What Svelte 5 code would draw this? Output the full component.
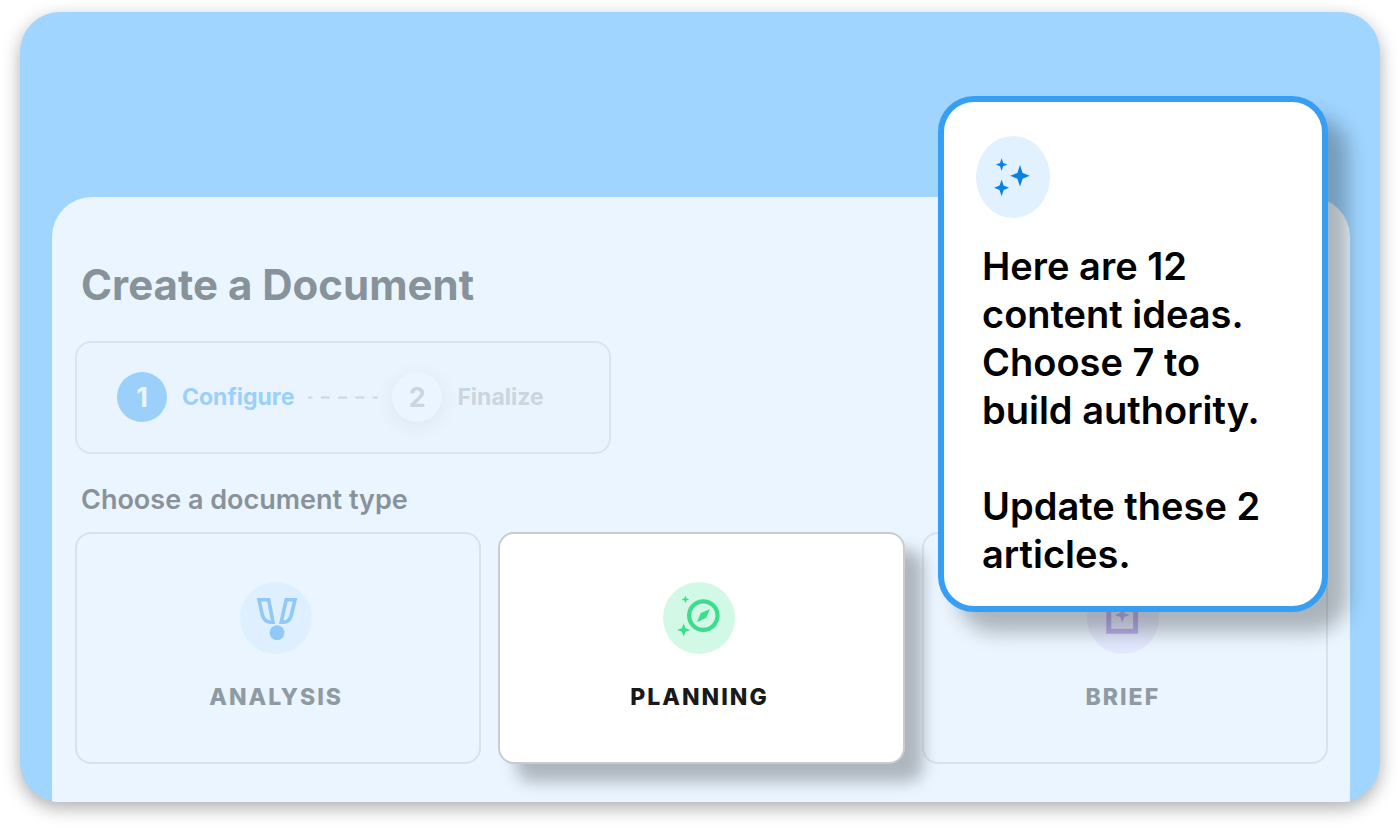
<script>
	const steps = [
		{ number: 1, label: 'Configure' },
		{ number: 2, label: 'Finalize' }
	];

	const documentTypes = [
		{ id: 'analysis', label: 'Analysis' },
		{ id: 'planning', label: 'Planning' },
		{ id: 'brief', label: 'Brief' }
	];

	let currentStep = $state(1);
	let selected = $state('planning');

	// four-pointed sparkle centred on cx, cy
	function sparkle(cx, cy, rx, ry = rx) {
		const x = rx * 0.27;
		const y = ry * 0.27;
		return `M${cx} ${cy - ry}L${cx + x} ${cy - y}L${cx + rx} ${cy}L${cx + x} ${cy + y}L${cx} ${cy + ry}L${cx - x} ${cy + y}L${cx - rx} ${cy}L${cx - x} ${cy - y}Z`;
	}
</script>

<main class="stage">
	<section class="panel">
		<h1>Create a Document</h1>

		<ol class="stepper">
			{#each steps as step (step.number)}
				<li class="step" class:current={step.number === currentStep}>
					<span class="number">{step.number}</span>
					<span class="label">{step.label}</span>
				</li>
				{#if step.number < steps.length}
					<li class="connector" aria-hidden="true">
						<svg width="70" height="3" viewBox="0 0 70 3">
							<path d="M0 1.5H70" stroke-width="2.2" stroke-dasharray="9 8.3" stroke-dashoffset="4.5" />
						</svg>
					</li>
				{/if}
			{/each}
		</ol>

		<h2>Choose a document type</h2>

		<div class="cards">
			{#each documentTypes as type (type.id)}
				<button
					type="button"
					class="card {type.id}"
					class:selected={selected === type.id}
					aria-pressed={selected === type.id}
					onclick={() => (selected = type.id)}
				>
					<svg class="icon" viewBox="0 0 72 72" aria-hidden="true">
						<circle class="disc" cx="36" cy="36" r="36" />
						{#if type.id === 'analysis'}
							<path
								class="line"
								stroke-width="3.6"
								d="M19 17.8H28.7L33 40.3H31C26.5 40.3 23.4 37 22.3 32.8ZM46.2 17.8H55L51.2 33.5C50 37.8 47.5 40.3 43.3 40.3H41.2Z"
							/>
							<circle class="fill" cx="37" cy="50.7" r="7.4" />
						{:else if type.id === 'planning'}
							<circle class="line" stroke-width="4.2" cx="40.3" cy="33.6" r="14.2" />
							<path class="fill" d="M47 27L43.2 35.8L34 40.3L37.6 31.3Z" />
							<path class="fill" d={sparkle(22.4, 17.4, 3.8)} />
							<path class="fill" d={sparkle(20.7, 48, 6.6)} />
						{:else}
							<path class="line" stroke-width="5" d="M21.8 16.5H48.6V49.2H21.8Z" />
							<path class="fill" d={sparkle(35.2, 33, 7.5)} />
						{/if}
					</svg>
					<span>{type.label}</span>
				</button>
			{/each}
		</div>
	</section>

	<aside class="suggestion" aria-label="Suggestion">
		<svg class="badge" viewBox="0 0 74 82" aria-hidden="true">
			<ellipse cx="37" cy="41" rx="37" ry="41" />
			<path d={sparkle(25.6, 28.6, 5.8, 6.3)} />
			<path d={sparkle(25.6, 51.8, 7.5, 8.4)} />
			<path d={sparkle(44, 39.8, 9.8, 10.7)} />
		</svg>
		<p>Here are 12 content ideas. Choose 7 to build authority.</p>
		<p>Update these 2 articles.</p>
	</aside>
</main>

<style>
	:global(body) {
		margin: 0;
		background: #fff;
	}

	.stage {
		position: relative;
		margin: 12px 20px 28px;
		padding: 185px 30px 0 32px;
		border-radius: 40px;
		background: #a0d5ff;
		box-shadow: 0 6px 18px rgba(0, 0, 0, 0.32);
		font-family: Inter, 'Liberation Sans', sans-serif;
	}

	/* the slight bottom radius keeps the panel inside the rounded stage */
	.panel {
		padding: 63px 22px 38px 23px;
		border-radius: 40px 40px 10px 8px / 40px 40px 1px 1px;
		background: #eaf5ff;
	}

	h1,
	h2 {
		margin: 0;
		padding-left: 6px;
		color: #88929a;
	}

	h1 {
		font-size: 42px;
		line-height: 50px;
		font-weight: 700;
	}

	h2 {
		margin-top: 28px;
		font-size: 27px;
		line-height: 36px;
		font-weight: 600;
	}

	.stepper {
		display: flex;
		align-items: center;
		box-sizing: border-box;
		width: fit-content;
		margin: 31px 0 0;
		padding: 29px 65px 30px 40px;
		border: 2px solid #d9e4ed;
		border-radius: 16px;
		background: #e9f4fe;
		list-style: none;
	}

	.step {
		display: flex;
		align-items: center;
		gap: 15px;
		color: #cbd5de;
		font-size: 23px;
		font-weight: 700;
	}

	.number {
		display: grid;
		place-items: center;
		width: 50px;
		height: 50px;
		border-radius: 50%;
		background: #ebf5ff;
		box-shadow: 0 4px 20px rgba(60, 80, 100, 0.08);
		font-size: 27px;
	}

	.step.current {
		color: #9bd0fb;
	}

	.current .number {
		background: #9bd0fb;
		box-shadow: none;
		color: #ebf5ff;
	}

	.connector {
		display: flex;
		margin: 0 14px;
		stroke: #cbd5de;
	}

	.cards {
		display: grid;
		grid-template-columns: repeat(3, 1fr);
		gap: 17px;
		margin-top: 14px;
	}

	.card {
		display: flex;
		flex-direction: column;
		align-items: center;
		gap: 28px;
		padding: 48px 24px 50px 20px;
		border: 2px solid rgba(140, 150, 160, 0.2);
		border-radius: 16px;
		background: transparent;
		color: #8f9aa2;
		font-family: inherit;
		font-size: 23px;
		line-height: 30px;
		font-weight: 800;
		letter-spacing: 2px;
		text-transform: uppercase;
		cursor: pointer;
	}

	.card.selected {
		border-color: #cbcbcb;
		background: #fff;
		box-shadow: 18px 18px 16px rgba(0, 0, 0, 0.26);
		color: #18191b;
	}

	.icon {
		width: 72px;
		height: 72px;
	}

	.line {
		fill: none;
		stroke: currentColor;
	}

	.fill {
		fill: currentColor;
	}

	.analysis .icon {
		color: #90c8f8;
	}

	.analysis .disc {
		fill: #def0ff;
	}

	.planning .icon {
		color: #3cdd8c;
	}

	.planning .disc {
		fill: #d2f9e5;
	}

	.brief .icon {
		color: #bbb0ee;
	}

	.brief .disc {
		fill: #e2e8fd;
	}

	.suggestion {
		position: absolute;
		top: 84px;
		right: 52px;
		box-sizing: border-box;
		width: 390px;
		padding: 34px 32px 28px;
		border: 6px solid #369ff4;
		border-radius: 36px;
		background: #fff;
		box-shadow: 20px 20px 20px rgba(0, 0, 0, 0.27);
	}

	.badge {
		display: block;
		width: 74px;
		height: 82px;
		margin-bottom: 24px;
		fill: #0d80e4;
	}

	.badge ellipse {
		fill: #e1f1ff;
	}

	.suggestion p {
		margin: 0 0 48px;
		padding-left: 6px;
		color: #000;
		font-size: 38px;
		line-height: 48px;
		font-weight: 600;
	}

	.suggestion p:last-child {
		margin-bottom: 0;
	}
</style>
